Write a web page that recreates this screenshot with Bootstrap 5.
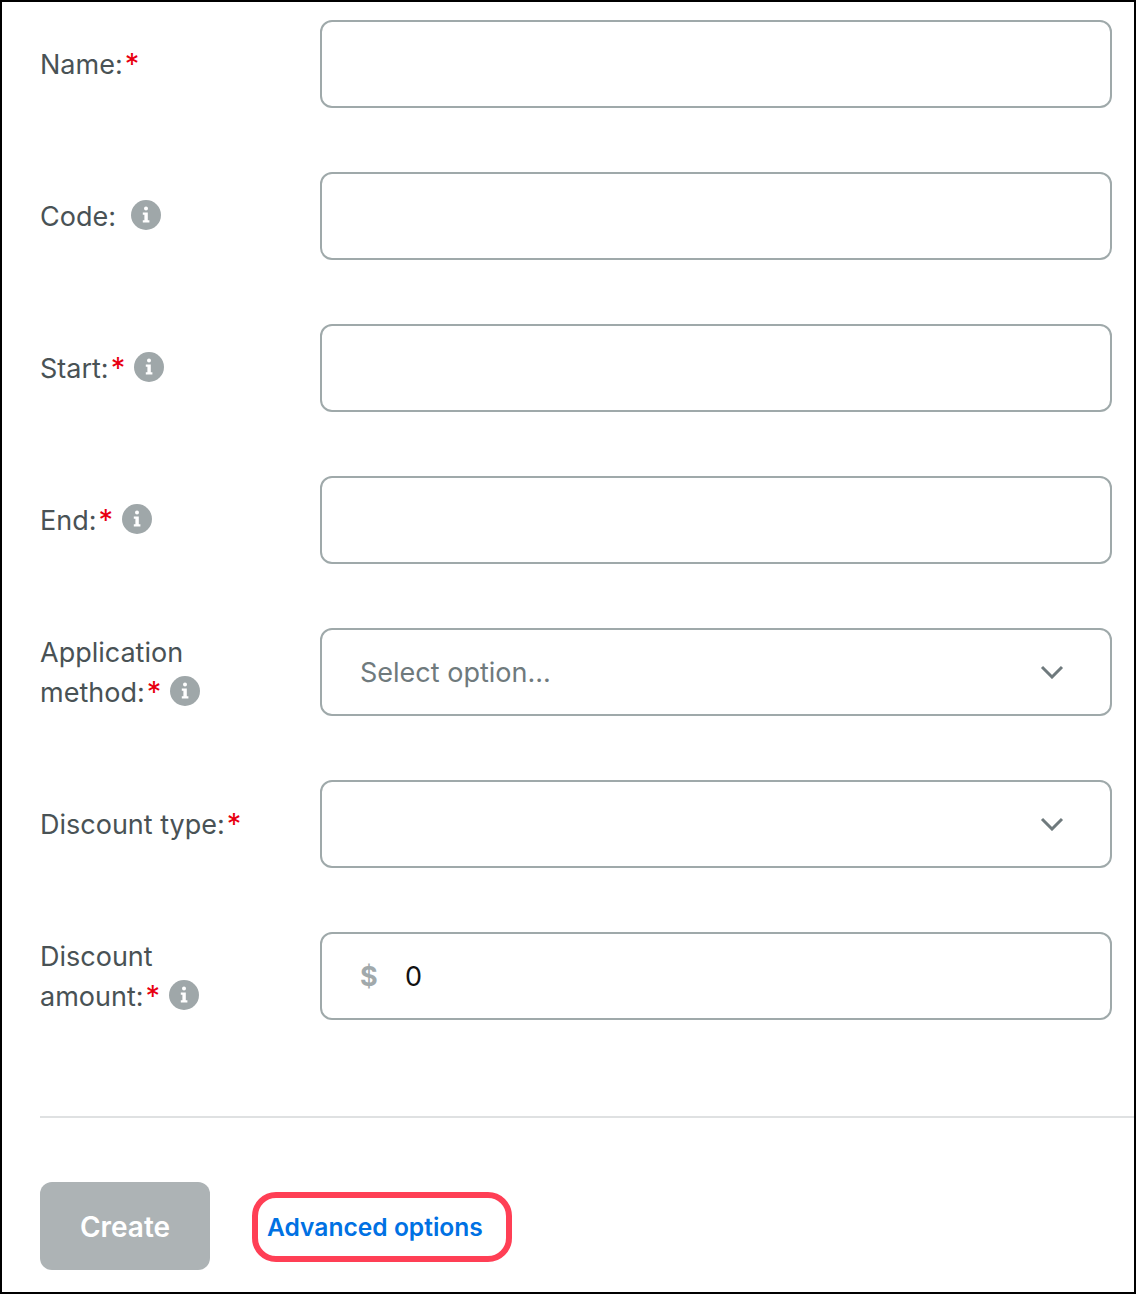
<!DOCTYPE html>
<html lang="en">
<head>
<meta charset="utf-8">
<title>Create discount</title>
<link href="https://cdn.jsdelivr.net/npm/bootstrap@5.3.0/dist/css/bootstrap.min.css" rel="stylesheet">
<style>
html,body{height:100%}
body{font-family:Inter,"Liberation Sans",sans-serif;background:#fff;color:#495255}
.frame{box-sizing:border-box;height:1294px;border:2px solid #000;padding:18px 0 0 38px;display:flex;flex-direction:column;overflow:hidden}
.fields{display:flex;flex-direction:column;gap:64px;padding-right:22px}
.field{display:flex;align-items:center;height:88px}
.lbl{width:280px;flex:none;font-size:27px;line-height:40px;margin:0;padding-top:2px;color:#495255}
.req{color:#e8000f;margin-left:2px;font-size:29px;line-height:1}
.tip{display:inline-block;width:30px;height:30px;vertical-align:-4px;margin-left:9px}
.tip.wide{margin-left:15px}
.box{flex:1;height:88px;border:2px solid #9fa9aa;border-radius:12px;background:#fff;display:flex;align-items:center;padding:0 38px;font-size:27px;min-width:0}
.box.pick{justify-content:space-between;padding-right:46px;color:#6f7a7d}
.box span{padding-top:3px}
.box input{border:0;outline:0;width:100%;height:100%;background:transparent;font:inherit;padding:0}
.dollar{color:#a1a9ab;font-weight:700;width:45px;flex:none}
.amount{color:#111}
.sep{height:2px;background:#dfe1e2;margin-top:96px;flex:none}
.acts{display:flex;align-items:center;margin-top:64px;gap:42px}
.go{width:170px;height:88px;border-radius:12px;background:#adb3b5;border:0;color:#fff;font-size:28px;font-weight:600;opacity:1;padding:1px 0 0}
.go:disabled{background:#adb3b5;color:#fff;opacity:1}
.adv{display:block;box-sizing:border-box;width:260px;height:70px;margin-top:2px;line-height:58px;border:6px solid #ff3f55;border-radius:24px;padding-left:9px;color:#0071e3;font-size:24.6px;font-weight:600;text-decoration:none;white-space:nowrap}
</style>
</head>
<body>
<svg width="0" height="0" class="d-block" aria-hidden="true"><defs>
<symbol id="inf" viewBox="0 0 30 30"><circle cx="15" cy="15" r="15" fill="#9fa7a9"/><path fill="#fff" d="M15 6.6a2 2 0 1 1 0 4 2 2 0 0 1 0-4zM11.8 12.6h5v7.6h1.6v2.2h-6.6v-2.2h1.6v-5.4h-1.6z"/></symbol>
<symbol id="chev" viewBox="0 0 24 14"><path d="M2 2l10 10L22 2" fill="none" stroke="#6f7a7d" stroke-width="3"/></symbol>
</defs></svg>
<div class="frame">
<form class="fields">
<div class="field"><label class="lbl">Name:<span class="req">*</span></label><div class="box"><input type="text" aria-label="Name"></div></div>
<div class="field"><label class="lbl">Code:<svg class="tip wide"><use href="#inf"/></svg></label><div class="box"><input type="text" aria-label="Code"></div></div>
<div class="field"><label class="lbl">Start:<span class="req">*</span><svg class="tip"><use href="#inf"/></svg></label><div class="box"><input type="text" aria-label="Start"></div></div>
<div class="field"><label class="lbl">End:<span class="req">*</span><svg class="tip"><use href="#inf"/></svg></label><div class="box"><input type="text" aria-label="End"></div></div>
<div class="field"><label class="lbl">Application<br>method:<span class="req">*</span><svg class="tip"><use href="#inf"/></svg></label><div class="box pick"><span>Select option...</span><svg width="24" height="14"><use href="#chev"/></svg></div></div>
<div class="field"><label class="lbl">Discount type:<span class="req">*</span></label><div class="box pick"><span></span><svg width="24" height="14"><use href="#chev"/></svg></div></div>
<div class="field"><label class="lbl">Discount<br>amount:<span class="req">*</span><svg class="tip"><use href="#inf"/></svg></label><div class="box"><span class="dollar">$</span><span class="amount">0</span></div></div>
</form>
<div class="sep"></div>
<div class="acts">
<button type="button" class="btn go" disabled>Create</button>
<a class="adv" href="#">Advanced options</a>
</div>
</div>
<script src="https://cdn.jsdelivr.net/npm/bootstrap@5.3.0/dist/js/bootstrap.bundle.min.js"></script>
</body>
</html>
